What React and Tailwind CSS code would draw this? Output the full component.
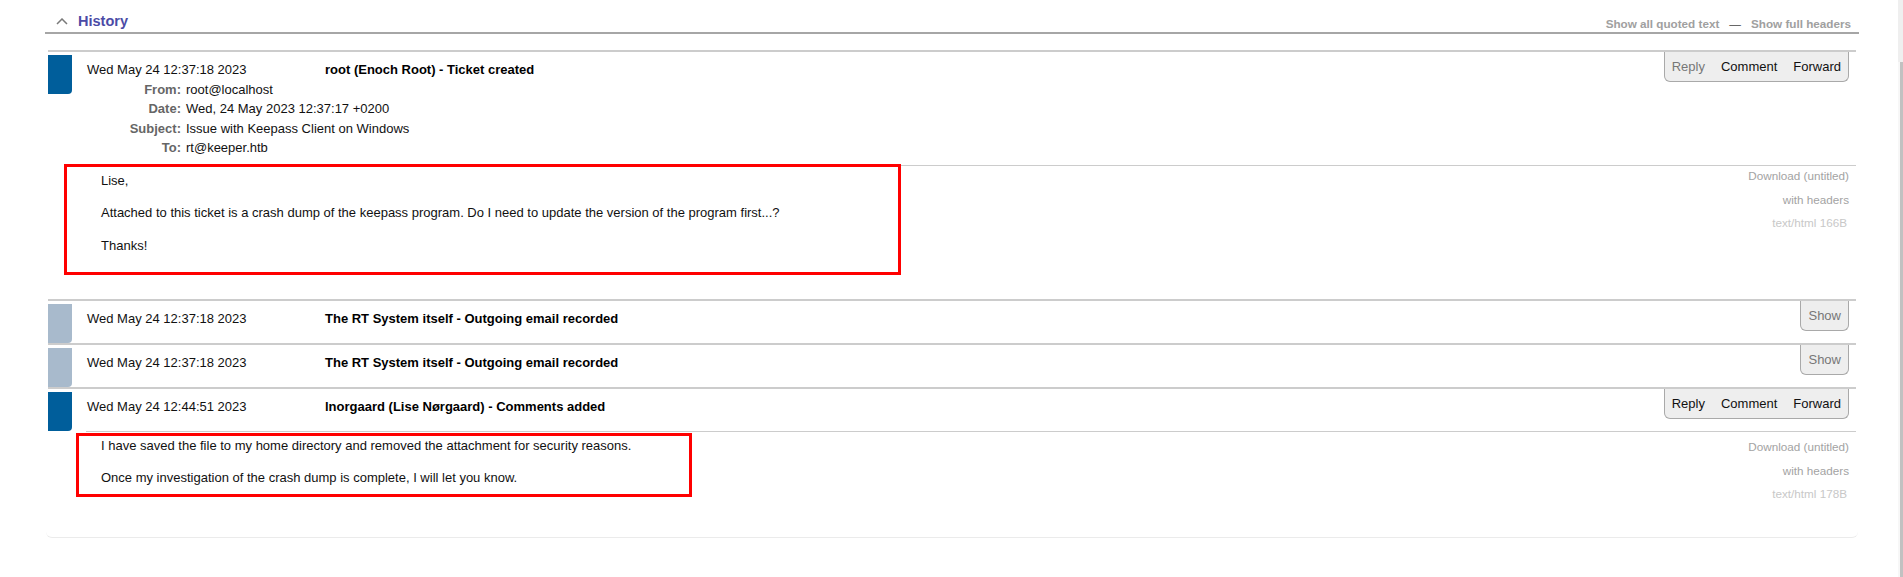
import React from "react";

const FONT = "font-['Liberation_Sans',Arial,Helvetica,sans-serif]";

function Bar({ light }) {
  return (
    <div
      className={`w-[24px] h-[39px] mt-[3px] shrink-0 rounded-br-[4px] ${
        light ? "bg-[#a8bacc]" : "bg-[#005e9b]"
      }`}
    />
  );
}

function Actions({ items }) {
  return (
    <div className="absolute right-[7px] top-0 h-[30px] flex items-center gap-4 px-[7px] bg-[#eeeeee] border border-t-0 border-[#a9a9a9] rounded-b-[6px] text-[13px]">
      {items.map((it) => (
        <span key={it.label} className={it.dim ? "text-[#777777]" : "text-[#111111]"}>
          {it.label}
        </span>
      ))}
    </div>
  );
}

function HeaderRow({ label, value }) {
  return (
    <div className="flex">
      <span className="w-[94px] text-right font-bold text-[#666666]">{label}</span>
      <span className="ml-[5px] text-[#111111]">{value}</span>
    </div>
  );
}

function RightCol({ pt, size }) {
  return (
    <div className={`flex flex-col items-end pr-[7px] text-[11.7px] leading-[14px] ${pt}`}>
      <span className="text-[#a3a3a3]">Download (untitled)</span>
      <span className="text-[#a3a3a3] mt-[10px]">with headers</span>
      <span className="text-[#c8c8c8] mt-[9px] mr-[2px]">text/html {size}</span>
    </div>
  );
}

function Transaction({ light, date, title, headers, actions, children }) {
  return (
    <div className="relative border-t-2 border-[#cccccc]">
      <div className="flex">
        <Bar light={light} />
        <div className="flex-1 pl-[15px] pt-[8px] pb-[7px] text-[13px] leading-[19.6px]">
          <div className="flex">
            <span className="w-[238px] text-[#111111]">{date}</span>
            <span className="font-bold text-[#000000]">{title}</span>
          </div>
          {headers &&
            headers.map((h) => <HeaderRow key={h[0]} label={h[0]} value={h[1]} />)}
        </div>
        <Actions items={actions} />
      </div>
      {children}
    </div>
  );
}

export default function App() {
  return (
    <div className={`${FONT} h-[577px] w-full overflow-hidden bg-white flex`}>
      <div className="flex-1">
        {/* History title bar */}
        <div className="ml-[45px] w-[1814px] h-[34px] border-b-2 border-[#a6a6a6] flex justify-between">
          <div className="flex items-start">
            <svg width="12" height="7" viewBox="0 0 12 7" className="ml-[11px] mt-[18px]">
              <polyline points="1,6 6,1 11,6" fill="none" stroke="#7a7a7a" strokeWidth="1.5" />
            </svg>
            <span className="ml-[10px] mt-[12px] text-[14.5px] leading-[18px] font-bold text-[#4b4ba6]">History</span>
          </div>
          <div className="flex items-start gap-[10px] mt-[17px] mr-[8px] text-[11.7px] leading-[14px] font-bold text-[#a0a0a0]">
            <span>Show all quoted text</span>
            <span className="font-normal text-[#444444]">—</span>
            <span>Show full headers</span>
          </div>
        </div>

        {/* Transactions */}
        <div className="mt-[16px] ml-[46px] w-[1812px] px-[2px] border-b border-[#ebebeb] rounded-b-[6px]">
          <Transaction
            date="Wed May 24 12:37:18 2023"
            title="root (Enoch Root) - Ticket created"
            headers={[
              ["From:", "root@localhost"],
              ["Date:", "Wed, 24 May 2023 12:37:17 +0200"],
              ["Subject:", "Issue with Keepass Client on Windows"],
              ["To:", "rt@keeper.htb"],
            ]}
            actions={[
              { label: "Reply", dim: true },
              { label: "Comment" },
              { label: "Forward" },
            ]}
          >
            <div className="relative ml-[38px] border-t border-[#cccccc] flex justify-between h-[134px]">
              <div className="pl-[15px] pt-[5px] text-[13px] leading-[19.5px] text-[#111111]">
                <p>Lise,</p>
                <p className="mt-[13px]">
                  Attached to this ticket is a crash dump of the keepass program. Do I need to update the version of the program first...?
                </p>
                <p className="mt-[13px]">Thanks!</p>
              </div>
              <RightCol pt="pt-[3px]" size="166B" />
              <div className="absolute left-[-22px] top-[-2px] w-[837px] h-[111px] border-[3px] border-[#ff0000]" />
            </div>
          </Transaction>

          <Transaction
            light
            date="Wed May 24 12:37:18 2023"
            title="The RT System itself - Outgoing email recorded"
            actions={[{ label: "Show", dim: true }]}
          />
          <Transaction
            light
            date="Wed May 24 12:37:18 2023"
            title="The RT System itself - Outgoing email recorded"
            actions={[{ label: "Show", dim: true }]}
          />

          <Transaction
            date="Wed May 24 12:44:51 2023"
            title="lnorgaard (Lise Nørgaard) - Comments added"
            actions={[
              { label: "Reply" },
              { label: "Comment" },
              { label: "Forward" },
            ]}
          >
            <div className="relative ml-[38px] border-t border-[#cccccc] flex justify-between h-[106px]">
              <div className="pl-[15px] pt-[4px] text-[13px] leading-[19.5px] text-[#111111]">
                <p>I have saved the file to my home directory and removed the attachment for security reasons.</p>
                <p className="mt-[13px]">Once my investigation of the crash dump is complete, I will let you know.</p>
              </div>
              <RightCol pt="pt-[8px]" size="178B" />
              <div className="absolute left-[-10px] top-[1px] w-[616px] h-[64px] border-[3px] border-[#ff0000]" />
            </div>
          </Transaction>
        </div>
      </div>

      {/* scrollbar */}
      <div className="w-[5px] h-[577px] shrink-0 flex flex-col bg-[#f7f7f7]">
        <div className="h-[62px] bg-[#efefef]" />
        <div className="flex-1 flex justify-end">
          <div className="w-[3px] h-full bg-[#c1c1c1]" />
        </div>
      </div>
    </div>
  );
}
